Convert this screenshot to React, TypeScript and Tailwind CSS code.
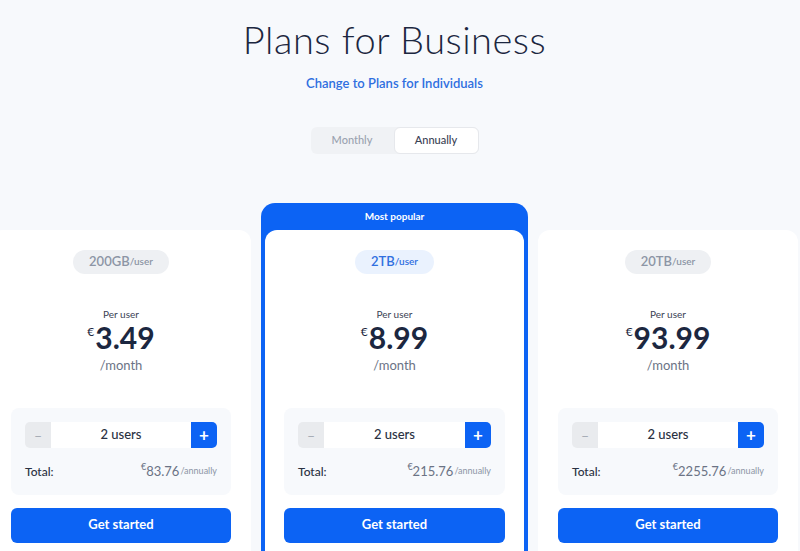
import React, { useState } from 'react';

// Pricing page: business plans with per-user steppers
type Plan = {
  id: string;
  storage: string;
  price: string;
  total: string;
  popular?: boolean;
};

const plans: Plan[] = [
  { id: 'basic', storage: '200GB', price: '3.49', total: '83.76' },
  { id: 'pro', storage: '2TB', price: '8.99', total: '215.76', popular: true },
  { id: 'max', storage: '20TB', price: '93.99', total: '2255.76' },
];

const font = { fontFamily: 'Lato, "Noto Sans", sans-serif' };

const PlanBody: React.FC<{ plan: Plan }> = ({ plan }) => {
  const [users, setUsers] = useState(2);

  return (
    <div className="flex flex-col items-center">
      <div
        className={
          plan.popular
            ? 'mt-[20px] flex h-[24px] items-center rounded-full bg-[#eaf2fe] px-[16px] text-[#2f6fe0]'
            : 'mt-[20px] flex h-[24px] items-center rounded-full bg-[#eef0f3] px-[16px] text-[#8c95a5]'
        }
      >
        <span className="text-[13px] font-semibold">{plan.storage}</span>
        <span className="text-[10px] font-semibold">/user</span>
      </div>

      <div className="mt-[34px] text-[10px] leading-[12px] text-[#3a4254]">Per user</div>
      <div className="flex items-start text-[#1c2740]">
        <span className="mt-[3px] mr-[1px] text-[12px]">€</span>
        <span className="text-[30px] font-bold leading-[34px]">{plan.price}</span>
      </div>
      <div className="mt-[2px] text-[13px] text-[#6b7385]">/month</div>

      <div className="mt-[33px] w-full rounded-[8px] bg-[#f7f9fc] px-[14px] pt-[14px] pb-[13px]">
        <div className="flex h-[26px] items-stretch">
          <button
            onClick={() => setUsers((u) => Math.max(1, u - 1))}
            className="flex w-[26px] items-center justify-center rounded-l-[5px] bg-[#e9ebee] text-[14px] text-[#a3a9b3]"
          >
            –
          </button>
          <div className="flex flex-1 items-center justify-center bg-white text-[13px] font-medium text-[#2a3142]">
            {users} users
          </div>
          <button
            onClick={() => setUsers((u) => u + 1)}
            className="flex w-[26px] items-center justify-center rounded-r-[5px] bg-[#0c63f4] text-[17px] font-bold text-white"
          >
            +
          </button>
        </div>
        <div className="mt-[14px] flex items-center justify-between">
          <span className="text-[12px] font-medium text-[#2a3142]">Total:</span>
          <span className="flex items-start text-[#6b7385]">
            <span className="mt-[-2px] text-[9px]">€</span>
            <span className="text-[13px]">{plan.total}</span>
            <span className="ml-[1px] mt-[2px] text-[9px] text-[#8c95a5]">/annually</span>
          </span>
        </div>
      </div>

      <button className="mt-[13px] h-[35px] w-full rounded-[6px] bg-[#0c63f4] text-[13px] font-bold text-white">
        Get started
      </button>
    </div>
  );
};

const App: React.FC = () => {
  const [annual, setAnnual] = useState(true);

  return (
    <div className="h-[551px] w-[800px] overflow-hidden bg-[#f7f9fc]" style={font}>
      <div className="w-[789px]">
        <header className="flex flex-col items-center pt-[16px]">
          <h1 className="text-[38px] font-light leading-[47px] tracking-[0.5px] text-[#1c2740]">
            Plans for Business
          </h1>
          <a className="mt-[11px] text-[13px] font-semibold text-[#2f6fe0]">Change to Plans for Individuals</a>

          <div className="mt-[33px] flex h-[27px] w-[168px] rounded-[6px] bg-[#f0f2f5] text-[11px] font-medium">
            <button
              onClick={() => setAnnual(false)}
              className={
                annual
                  ? 'flex-1 rounded-[6px] text-[#9aa2b0]'
                  : 'flex-1 rounded-[6px] border border-[#e6e8ec] bg-white text-[#3a4254]'
              }
            >
              Monthly
            </button>
            <button
              onClick={() => setAnnual(true)}
              className={
                annual
                  ? 'flex-1 rounded-[6px] border border-[#e6e8ec] bg-white text-[#3a4254]'
                  : 'flex-1 rounded-[6px] text-[#9aa2b0]'
              }
            >
              Annually
            </button>
          </div>
        </header>

        <section className="mt-[49px] flex items-start justify-center gap-[10px]">
          {plans.map((plan) =>
            plan.popular ? (
              <div key={plan.id} className="w-[267px] shrink-0 rounded-t-[14px] bg-[#0c63f4] px-[4px]">
                <div className="flex h-[27px] items-center justify-center text-[10px] font-bold text-white">
                  Most popular
                </div>
                <div className="h-[340px] rounded-t-[12px] bg-white px-[19px]">
                  <PlanBody plan={plan} />
                </div>
              </div>
            ) : (
              <div
                key={plan.id}
                className="mt-[27px] h-[340px] w-[260px] shrink-0 rounded-t-[12px] bg-white px-[20px]"
              >
                <PlanBody plan={plan} />
              </div>
            )
          )}
        </section>
      </div>
    </div>
  );
};

export default App;
